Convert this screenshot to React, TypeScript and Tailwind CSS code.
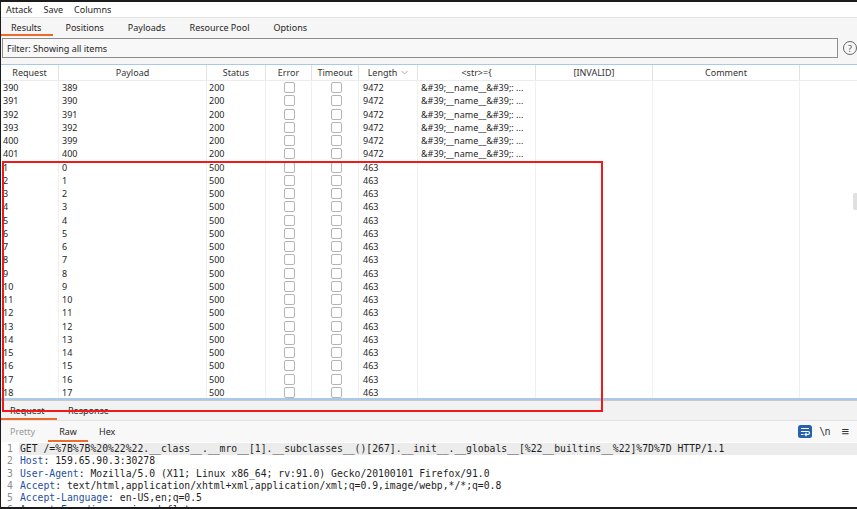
const cols = [
  { name: "Request", w: "w-[58px]" },
  { name: "Payload", w: "w-[148px]" },
  { name: "Status", w: "w-[59px]" },
  { name: "Error", w: "w-[46px]" },
  { name: "Timeout", w: "w-[47px]" },
  { name: "Length", w: "w-[59px]" },
  { name: "<str>={", w: "w-[118px]" },
  { name: "[INVALID]", w: "w-[117px]" },
  { name: "Comment", w: "w-[147px]" },
];

const rows: { req: string; payload: string; status: string; len: string; str: string }[] = [
  ...[
    ["390", "389"],
    ["391", "390"],
    ["392", "391"],
    ["393", "392"],
    ["400", "399"],
    ["401", "400"],
  ].map(([req, payload]) => ({ req, payload, status: "200", len: "9472", str: "&#39;__name__&#39;: ..." })),
  ...Array.from({ length: 18 }, (_, i) => ({
    req: String(i + 1),
    payload: String(i),
    status: "500",
    len: "463",
    str: "",
  })),
];

function Check() {
  return <div className="h-[11px] w-[11px] rounded-[2px] border border-[#b4b4b4] bg-white" />;
}

function WrapIcon() {
  return (
    <svg width="14" height="13" viewBox="0 0 14 13">
      <rect x="0" y="0" width="14" height="13" rx="2.5" fill="#2763ad" />
      <path d="M3 3.5h8M3 6.5h7a1.5 1.5 0 0 1 0 3H7.5M3 9.5h2.5" stroke="#fff" strokeWidth="1.2" fill="none" />
      <path d="M8.5 8l-1.5 1.5 1.5 1.5" stroke="#fff" strokeWidth="1.1" fill="none" />
    </svg>
  );
}

const code: [string, string][] = [
  ["", "GET /=%7B%7B%20%22%22.__class__.__mro__[1].__subclasses__()[267].__init__.__globals__[%22__builtins__%22]%7D%7D HTTP/1.1"],
  ["Host", ": 159.65.90.3:30278"],
  ["User-Agent", ": Mozilla/5.0 (X11; Linux x86_64; rv:91.0) Gecko/20100101 Firefox/91.0"],
  ["Accept", ": text/html,application/xhtml+xml,application/xml;q=0.9,image/webp,*/*;q=0.8"],
  ["Accept-Language", ": en-US,en;q=0.5"],
  ["Accept-Encoding", ": gzip, deflate"],
];

export default function App() {
  return (
    <div className="relative flex h-[509px] w-[857px] flex-col overflow-hidden border-t-2 border-b-2 border-l border-[#1c1c1c] bg-white font-['Noto_Sans',sans-serif] text-[9px] text-[#262626]">
      {/* menu */}
      <div className="flex h-[15px] shrink-0 items-center gap-[11px] pl-[5px] leading-none">
        <span>Attack</span>
        <span>Save</span>
        <span>Columns</span>
      </div>

      {/* tabs */}
      <div className="flex h-[19px] shrink-0 border-t border-[#e4e4e4] bg-[#f6f6f6] leading-none">
        {["Results", "Positions", "Payloads", "Resource Pool", "Options"].map((t, i) => (
          <div
            key={t}
            className={
              "flex items-center " +
              (i === 0 ? "border-b-2 border-[#ee6a2c] pl-[10px] pr-[12px] pt-[2px]" : "px-[12px]")
            }
          >
            {t}
          </div>
        ))}
      </div>

      {/* filter */}
      <div className="flex h-[28px] shrink-0 items-start gap-[5px] bg-[#f6f6f6] pl-[1px] pt-[2px]">
        <div className="flex h-[20px] w-[836px] items-center border border-[#8e8e8e] bg-[#f8f8f8] pl-[4px] leading-none">
          Filter: Showing all items
        </div>
        <div className="mt-[3px] flex h-[14px] w-[14px] items-center justify-center rounded-full border border-[#666] text-[9px] leading-none text-[#555]">
          ?
        </div>
      </div>
      <div className="h-px shrink-0 bg-[#a9c8ea]" />

      {/* table header */}
      <div className="flex h-[16px] shrink-0 border-b border-[#ececec] leading-none text-[#333]">
        {cols.map((c) => (
          <div key={c.name} className={"flex items-center justify-center border-r border-[#e2e2e2] " + c.w}>
            {c.name}
            {c.name === "Length" && (
              <svg width="7" height="5" viewBox="0 0 7 5" className="ml-[4px]">
                <path d="M0.5 1l3 3 3-3" stroke="#a8a8a8" strokeWidth="0.9" fill="none" />
              </svg>
            )}
          </div>
        ))}
        <div className="flex-1" />
      </div>

      {/* table body */}
      <div className="relative h-[317px] shrink-0 overflow-hidden">
        {rows.map((r) => (
          <div key={r.req + r.payload} className="flex h-[13.25px] items-center whitespace-nowrap leading-none">
            <div className="flex h-full w-[58px] items-center border-r border-[#f0f0f0] pl-[2px]">{r.req}</div>
            <div className="flex h-full w-[148px] items-center border-r border-[#f0f0f0] pl-[3px]">{r.payload}</div>
            <div className="flex h-full w-[59px] items-center border-r border-[#f0f0f0] pl-[2px]">{r.status}</div>
            <div className="flex h-full w-[46px] items-center justify-center border-r border-[#f0f0f0] pl-[1px]">
              <Check />
            </div>
            <div className="flex h-full w-[47px] items-center justify-center border-r border-[#f0f0f0] pl-[2px]">
              <Check />
            </div>
            <div className="flex h-full w-[59px] items-center border-r border-[#f0f0f0] pl-[4px]">{r.len}</div>
            <div className="flex h-full w-[118px] items-center overflow-hidden border-r border-[#f0f0f0] pl-[3px]">{r.str}</div>
            <div className="h-full w-[117px] border-r border-[#f0f0f0]" />
            <div className="h-full w-[147px] border-r border-[#f0f0f0]" />
            <div className="flex-1" />
          </div>
        ))}
        <div className="absolute right-0 top-[112px] h-[17px] w-[4px] rounded-l-[2px] bg-[#e0e0e0]" />
      </div>
      <div className="h-[2px] shrink-0 bg-[#a9c8ea]" />

      {/* request / response tabs */}
      <div className="flex h-[20px] shrink-0 border-t border-[#c9c9c9] bg-[#f2f2f2] leading-none">
        <div className="flex w-[56px] items-center border-b-2 border-[#ee6a2c] pl-[9px] pt-[2px]">Request</div>
        <div className="flex items-center pl-[11px]">Response</div>
      </div>

      {/* pretty raw hex */}
      <div className="flex h-[22px] shrink-0 items-stretch border-t border-[#e4e4e4] bg-[#f8f8f8] leading-none">
        <div className="flex w-[47px] items-center pl-[9px] text-[#9a9a9a]">Pretty</div>
        <div className="flex w-[40px] items-center justify-center border-b-2 border-[#ee6a2c] pt-[2px]">Raw</div>
        <div className="flex items-center pl-[11px]">Hex</div>
        <div className="ml-auto flex items-center pr-[8px] text-[#333]">
          <WrapIcon />
          <span className="ml-[7px] font-['DejaVu_Sans_Mono',monospace] text-[10px] tracking-[-1px]">\n</span>
          <span className="ml-[12px] text-[13px]">≡</span>
        </div>
      </div>

      {/* code */}
      <div className="shrink-0 pt-px font-['DejaVu_Sans_Mono',monospace] text-[9.75px] leading-[12.25px] text-[#1e1e1e]">
        {code.map(([k, v], i) => (
          <div key={i} className="flex">
            <div className="w-[18px] shrink-0 pl-[6px] text-[#8c8c8c]">{i + 1}</div>
            <div className={"flex-1 whitespace-pre pl-px " + (i === 0 ? "bg-[#ececec]" : "")}>
              {k && <span className="text-[#1f4fa3]">{k}</span>}
              {v}
            </div>
          </div>
        ))}
      </div>

      {/* highlight rectangle */}
      <div className="absolute left-[1px] top-[159px] h-[251px] w-[601px] border-2 border-[#f01a1a]" />
    </div>
  );
}
